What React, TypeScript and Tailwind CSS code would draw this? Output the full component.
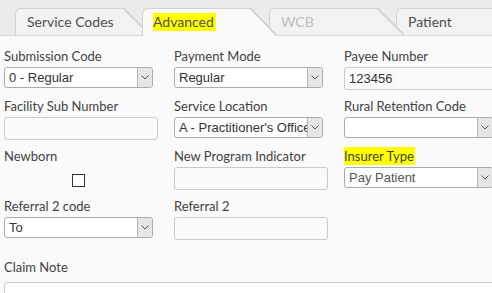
import React from 'react';

const slant =
    'bg-[linear-gradient(to_bottom_left,transparent_calc(50%_-_1px),#cdcdcd_calc(50%_-_0.5px),#cdcdcd_calc(50%_+_0.5px),#f2f2f2_calc(50%_+_1px))]';
const slantActive =
    'bg-[linear-gradient(to_bottom_left,transparent_calc(50%_-_1px),#cdcdcd_calc(50%_-_0.5px),#cdcdcd_calc(50%_+_0.5px),#fafafa_calc(50%_+_1px))]';

function Tab({ label, active, disabled, z }: { label: string; active?: boolean; disabled?: boolean; z: string }) {
    return (
        <div className={`relative flex -mr-[8px] ${z} ${active ? 'h-[28px] -mb-px' : 'h-[27px]'}`}>
            <div
                className={`w-[108px] rounded-tl-[6px] border-l border-t border-[#d2d2d2] pl-[10px] pt-[4px] text-[14px] leading-[18px] ${
                    active ? 'bg-[#fafafa]' : 'bg-[#f2f2f2]'
                } ${disabled ? 'text-[#bdbdbd]' : 'text-[#4f4f4f]'}`}
            >
                {active ? <span className="inline-block bg-[#ffff00] pr-[2px]">{label}</span> : <span className="pl-[1px]">{label}</span>}
            </div>
            <div className={`w-[27px] ${active ? slantActive : slant}`} />
        </div>
    );
}

function Label({ children, mark }: { children: React.ReactNode; mark?: boolean }) {
    return (
        <div className="h-[18px] mb-[2px] text-[13px] leading-[18px] text-[#424242]">
            {mark ? <span className="inline-block bg-[#ffff00] pr-[1px]">{children}</span> : children}
        </div>
    );
}

function Select({ value, light }: { value: string; light?: boolean }) {
    return (
        <div className="flex h-[21px] w-[149px] overflow-hidden rounded-[3px] border border-[#ababab] bg-white font-['Liberation_Sans',Arial,sans-serif]">
            <div className={`flex-1 overflow-hidden whitespace-nowrap pl-[4px] text-[13px] leading-[19px] ${light ? 'text-[#555]' : 'text-[#333]'}`}>
                {value}
            </div>
            <div className="flex w-[15px] shrink-0 items-center justify-center rounded-r-[2px] border-l border-[#b5b5b5] bg-[#e6e6e6]">
                <svg width="8" height="5" viewBox="0 0 8 5" fill="none">
                    <path d="M0.5 0.5 L4 4 L7.5 0.5" stroke="#555" strokeWidth="1" />
                </svg>
            </div>
        </div>
    );
}

function Input({ value, wide }: { value?: string; wide?: boolean }) {
    return (
        <div
            className={`h-[23px] rounded-[3px] border border-[#c9c9c9] bg-[#fafafa] pl-[4px] font-['Liberation_Sans',Arial,sans-serif] text-[13px] leading-[21px] text-[#333] ${
                wide ? 'w-[170px]' : 'w-[154px]'
            }`}
        >
            {value}
        </div>
    );
}

export default function App() {
    return (
        <div className="h-[293px] w-[492px] overflow-hidden bg-[#fafafa] font-['Lato','Open_Sans',sans-serif]">
            <div className="flex h-[36px] items-end border-b border-[#d9d9d9] bg-[#ebebeb] pl-[15px] pt-[8px]">
                <Tab label="Service Codes" z="z-30" />
                <Tab label="Advanced" active z="z-40" />
                <Tab label="WCB" disabled z="z-20" />
                <Tab label="Patient" z="z-10" />
            </div>

            <div className="px-[4px] pt-[11px]">
                <div className="grid grid-cols-[154px_154px_154px] gap-x-[16px] gap-y-[7px]">
                    <div>
                        <Label>Submission Code</Label>
                        <Select value="0 - Regular" />
                    </div>
                    <div>
                        <Label>Payment Mode</Label>
                        <Select value="Regular" />
                    </div>
                    <div>
                        <Label>Payee Number</Label>
                        <Input value="123456" wide />
                    </div>

                    <div>
                        <Label>Facility Sub Number</Label>
                        <Input />
                    </div>
                    <div>
                        <Label>Service Location</Label>
                        <Select value="A - Practitioner's Office" />
                    </div>
                    <div>
                        <Label>Rural Retention Code</Label>
                        <Select value="" />
                    </div>

                    <div>
                        <Label>Newborn</Label>
                        <div className="h-[23px] pl-[68px] pt-[7px]">
                            <div className="h-[13px] w-[13px] border border-[#333] bg-white" />
                        </div>
                    </div>
                    <div>
                        <Label>New Program Indicator</Label>
                        <Input />
                    </div>
                    <div>
                        <Label mark>Insurer Type</Label>
                        <Select value="Pay Patient" light />
                    </div>

                    <div>
                        <Label>Referral 2 code</Label>
                        <Select value="To" />
                    </div>
                    <div>
                        <Label>Referral 2</Label>
                        <Input />
                    </div>
                    <div />
                </div>

                <div className="mt-[18px] h-[18px] text-[13px] leading-[18px] text-[#424242]">Claim Note</div>
                <div className="mt-[6px] h-[40px] w-[520px] rounded-[3px] border border-[#c9c9c9] bg-white" />
            </div>
        </div>
    );
}
